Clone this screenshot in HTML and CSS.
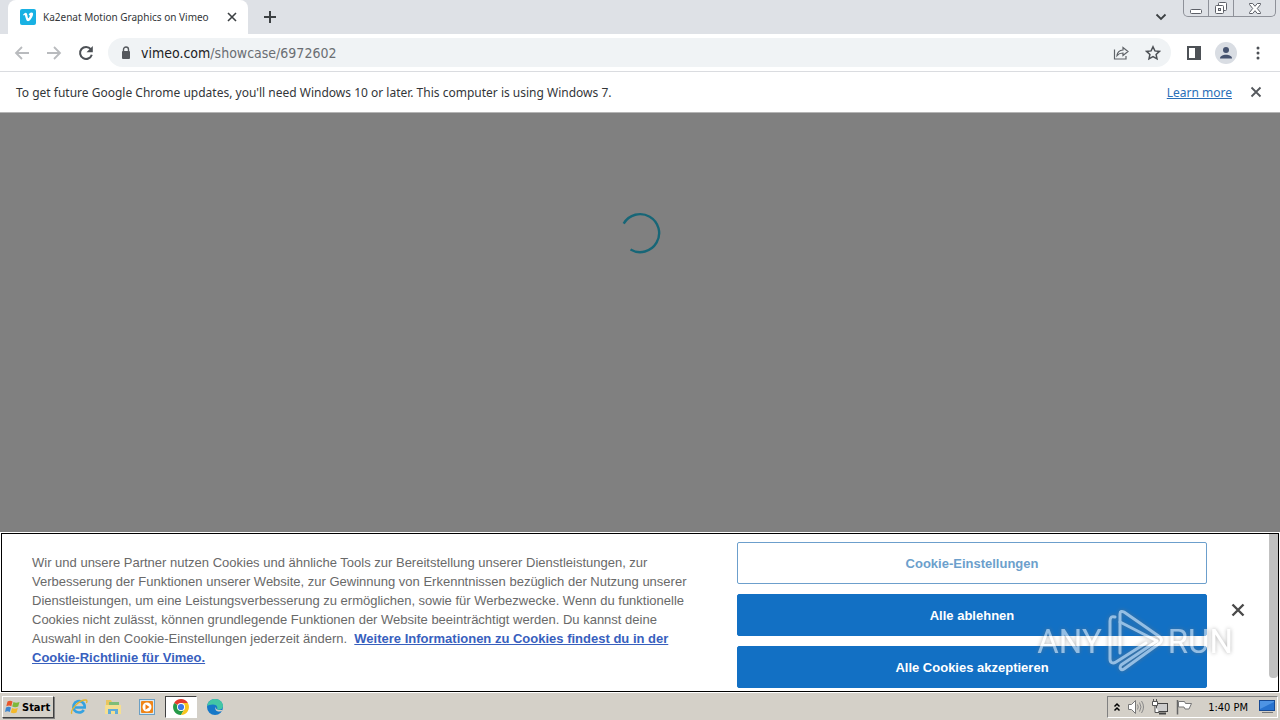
FILE: index.html
```html
<!DOCTYPE html>
<html lang="de">
<head>
    <meta charset="UTF-8">
    <meta name="viewport" content="width=device-width, initial-scale=1.0">
    <title>Ka2enat Motion Graphics on Vimeo</title>
    <link rel="stylesheet" href="styles.css">
</head>
<body>

    <header class="browser">
        <div class="tabstrip">
            <div class="tab">
                <svg class="favicon" viewBox="0 0 16 16" width="16" height="16">
                    <rect width="16" height="16" rx="2" fill="#19b1e3"/>
                    <path d="M3 5.700c1.100-1 2-1.900 2.700-1.900 1.900-.1 1.700 4.200 2.400 5.200.5.700 1.700-1.300 1.700-2.300 0-.8-.5-.9-1.100-.6.5-1.700 1.500-2.500 2.800-2.500 3.200 0 .9 4.700-.9 6.900-1.800 2.200-3.700 2.300-4.500-.3L4.900 6.400c-.2-.7-.7-.3-1.300 0z" fill="#fff"/>
                </svg>
                <span class="tab-title">Ka2enat Motion Graphics on Vimeo</span>
                <button class="icon-btn" aria-label="Close tab">
                    <svg viewBox="0 0 10 10" width="10" height="10"><path d="M1 1l8 8M9 1l-8 8" stroke="#3c4043" stroke-width="1.600"/></svg>
                </button>
            </div>
            <button class="icon-btn new-tab" aria-label="New tab">
                <svg viewBox="0 0 14 14" width="14" height="14"><path d="M7 1v12M1 7h12" stroke="#3c4043" stroke-width="2"/></svg>
            </button>
            <button class="icon-btn tab-search" aria-label="Search tabs">
                <svg viewBox="0 0 12 8" width="12" height="8"><path d="M1.500 1.500L6 6l4.500-4.500" fill="none" stroke="#3c4043" stroke-width="1.800"/></svg>
            </button>
            <div class="window-buttons">
                <button aria-label="Minimize"><svg viewBox="0 0 14 14" width="14" height="14"><rect x="1.500" y="8.500" width="11" height="4" rx="1" fill="#fff" stroke="#5d6068"/></svg></button>
                <button aria-label="Restore"><svg viewBox="0 0 14 14" width="14" height="14"><rect x="4.500" y="1.500" width="8" height="8" rx="1" fill="#fff" stroke="#5d6068"/><rect x="1.500" y="4.500" width="8" height="8" rx="1" fill="#fff" stroke="#5d6068"/><rect x="4.500" y="7.500" width="2" height="2" fill="#dee1e6" stroke="#5d6068"/></svg></button>
                <button class="wide" aria-label="Close"><svg viewBox="0 0 14 14" width="14" height="14"><path d="M1.500 2.500h3.200L7 5.300l2.300-2.800h3.200v1L9.300 7.500l3.200 4v1H9.300L7 9.700l-2.300 2.800H1.500v-1l3.200-4-3.200-4z" fill="#fff" stroke="#5d6068"/></svg></button>
            </div>
        </div>

        <div class="toolbar">
            <button class="icon-btn" aria-label="Back"><svg viewBox="0 0 16 16" width="16" height="16"><path d="M15 8H2M8 2L2 8l6 6" fill="none" stroke="#b9bbbe" stroke-width="1.800"/></svg></button>
            <button class="icon-btn" aria-label="Forward"><svg viewBox="0 0 16 16" width="16" height="16"><path d="M1 8h13M8 2l6 6-6 6" fill="none" stroke="#b9bbbe" stroke-width="1.800"/></svg></button>
            <button class="icon-btn" aria-label="Reload"><svg viewBox="0 0 16 16" width="16" height="16"><path d="M12.800 4.200A6 6 0 1 0 13.800 9.700" fill="none" stroke="#4d5156" stroke-width="2"/><path d="M14.800 1v6.300H8.500z" fill="#4d5156"/></svg></button>
            <div class="omnibox">
                <svg viewBox="0 0 10 14" width="10" height="14"><rect x="1" y="5" width="8" height="8" rx="1" fill="#55585d"/><path d="M2.500 6V3.500a2.500 2.500 0 0 1 5 0V6" fill="none" stroke="#55585d" stroke-width="1.400"/></svg>
                <a class="url" href="#">vimeo.com<span>/showcase/6972602</span></a>
                <button class="icon-btn" aria-label="Share"><svg viewBox="0 0 16 16" width="16" height="16"><path d="M1.500 4.500v9.500h11.500v-3" fill="none" stroke="#5f6368" stroke-width="1.200"/><path d="M4 10.500c.4-3.500 2.500-5.300 6-5.500V2.500L15 6.500l-5 4V8C7.500 8 5.500 8.700 4 10.500z" fill="none" stroke="#5f6368" stroke-width="1.200"/></svg></button>
                <button class="icon-btn" aria-label="Bookmark"><svg viewBox="0 0 16 16" width="16" height="16"><path d="M8 1.800l1.900 4.100 4.500.5-3.300 3 .9 4.400L8 11.600l-4 2.200.9-4.400-3.300-3 4.500-.5z" fill="none" stroke="#4d5156" stroke-width="1.500"/></svg></button>
            </div>
            <button class="icon-btn" aria-label="Side panel"><svg viewBox="0 0 14 14" width="14" height="14"><rect x="1" y="1" width="12" height="12" fill="none" stroke="#4d5156" stroke-width="2"/><rect x="8" y="1" width="5" height="12" fill="#4d5156"/></svg></button>
            <button class="icon-btn profile" aria-label="Profile"><svg viewBox="0 0 22 22" width="22" height="22"><circle cx="11" cy="11" r="11" fill="#d9dde3"/><circle cx="11" cy="8" r="3" fill="#46536f"/><path d="M5 16.500c0-5 12-5 12 0z" fill="#46536f"/></svg></button>
            <button class="icon-btn" aria-label="Menu"><svg viewBox="0 0 4 14" width="4" height="14"><circle cx="2" cy="2" r="1.500" fill="#4d5156"/><circle cx="2" cy="7" r="1.500" fill="#4d5156"/><circle cx="2" cy="12" r="1.500" fill="#4d5156"/></svg></button>
        </div>

        <div class="infobar">
            <span>To get future Google Chrome updates, you'll need Windows 10 or later. This computer is using Windows 7.</span>
            <a href="#">Learn more</a>
            <button class="icon-btn" aria-label="Dismiss"><svg viewBox="0 0 12 12" width="12" height="12"><path d="M1.500 1.500l9 9M10.500 1.500l-9 9" stroke="#55585d" stroke-width="1.800"/></svg></button>
        </div>
    </header>

    <main class="page">
        <svg class="spinner" viewBox="0 0 42 42" width="42" height="42"><path d="M4.700 11.600A19 19 0 1 1 11.500 37.500" fill="none" stroke="#176677" stroke-width="2.400"/></svg>
    </main>

    <section class="banner">
        <p class="policy">Wir und unsere Partner nutzen Cookies und ähnliche Tools zur Bereitstellung unserer Dienstleistungen, zur<br>
            Verbesserung der Funktionen unserer Website, zur Gewinnung von Erkenntnissen bezüglich der Nutzung unserer<br>
            Dienstleistungen, um eine Leistungsverbesserung zu ermöglichen, sowie für Werbezwecke. Wenn du funktionelle<br>
            Cookies nicht zulässt, können grundlegende Funktionen der Website beeinträchtigt werden. Du kannst deine<br>
            Auswahl in den Cookie-Einstellungen jederzeit ändern. &nbsp;<a href="#">Weitere Informationen zu Cookies findest du in der<br>
            Cookie-Richtlinie für Vimeo.</a></p>
        <div class="choices">
            <button class="settings">Cookie-Einstellungen</button>
            <button>Alle ablehnen</button>
            <button>Alle Cookies akzeptieren</button>
        </div>
        <button class="icon-btn banner-close" aria-label="Schließen"><svg viewBox="0 0 14 14" width="14" height="14"><path d="M1.500 1.500l11 11M12.500 1.500l-11 11" stroke="#4a4a4a" stroke-width="2.400"/></svg></button>
        <div class="scrollbar"></div>
    </section>

    <div class="watermark">
        <span>ANY</span>
        <svg viewBox="0 0 56 64" width="56" height="64">
            <g fill="none" stroke="#fff" stroke-width="3" stroke-linejoin="round" stroke-linecap="round">
                <path d="M8 8c-3-1-5 0-5 4v38c0 4 3 5 6 3l30-19"/>
                <path d="M13 44V5c0-3 2-3 4-2l36 25c2 2 2 4 0 6L17 60c-3 2-5-1-3-4l36-24"/>
                <path d="M13 13l37 19"/>
            </g>
        </svg>
        <span>RUN</span>
    </div>

    <footer class="taskbar">
        <button class="start">
            <svg viewBox="0 0 16 16" width="16" height="16"><path d="M2.500 2.500c2-1.200 3.500-1 5 0L6.300 7.200c-1.500-1-3-1-5 0z" fill="#e8562a"/><path d="M8.500 3c1.700 1 3.500 1 6 0l-1.300 4.600c-2 1-4 1-6 0z" fill="#7db83a"/><path d="M1 8.500c2-1 3.500-1 5 0L4.800 13c-1.500-1-3-1-4.800 0z" fill="#3c86d0"/><path d="M7 9c1.800 1 3.500 1 5.800 0l-1.200 4.500c-2 1-4 1-5.800 0z" fill="#f4b92b"/></svg>
            Start
        </button>
        <nav class="tasks">
            <button aria-label="Internet Explorer"><svg viewBox="0 0 18 18" width="18" height="18"><path d="M13.800 12A5.700 5.700 0 1 1 14.700 9.500H5" fill="none" stroke="#35a2e0" stroke-width="2.600"/><path d="M2 15.800C-1 13 9 1.500 16 2c1.500.2 1 2 .4 3" fill="none" stroke="#e5b52c" stroke-width="1.300"/></svg></button>
            <button aria-label="Explorer"><svg viewBox="0 0 18 18" width="18" height="18"><path d="M2 2h5l1 2h7v10H2z" fill="#e9c55f"/><path d="M5 4h10v3H5z" fill="#7fbd78"/><path d="M1 7h16v9H1z" fill="#f5df91"/><path d="M4 16v-5h10v5h-3v-3H7v3z" fill="#62acd8"/></svg></button>
            <button aria-label="Media Player"><svg viewBox="0 0 18 18" width="18" height="18"><rect x="1.500" y="1.500" width="15" height="15" fill="#d7e9f5" stroke="#6b9fc4"/><rect x="3" y="3" width="12" height="12" rx="1" fill="#ef8519"/><circle cx="9" cy="9" r="4.500" fill="#fff"/><path d="M7.500 6.300v5.400l4-2.700z" fill="#ef7a12"/></svg></button>
            <button class="active" aria-label="Chrome"><svg viewBox="0 0 18 18" width="18" height="18"><path d="M9 9L2.100 5A8 8 0 0 1 15.900 5H9z" fill="#e33b2e"/><path d="M9 9l3.500 2L9 17A8 8 0 0 1 2.100 5z" fill="#269a48"/><path d="M9 5h6.900A8 8 0 0 1 9 17l3.500-6z" fill="#f8c51f"/><circle cx="9" cy="9" r="4" fill="#fff"/><circle cx="9" cy="9" r="3.100" fill="#3b78e7"/></svg></button>
            <button aria-label="Edge"><svg viewBox="0 0 18 18" width="18" height="18"><circle cx="9" cy="9" r="8" fill="#1678c8"/><path d="M1.200 8C2 3 5.500 1 9 1c5 0 8 3.500 8 7 0 3-3 4.500-6 3.500 1-2 0-5-4-5-3 0-5 1-5.800 1.500z" fill="#43c6a5"/><path d="M9.700 9c-1 2 0 4.500 3.500 4.600 1.500 0 2.500-.4 3.100-1.100.8-1.500-2.500.5-5.300-1-1-.6-1-1.500-1.300-2.500z" fill="#d4d0c8"/></svg></button>
        </nav>
        <div class="tray">
            <svg viewBox="0 0 8 10" width="8" height="10"><path d="M1.500 4.500L4 2l2.500 2.500M1.500 8.500L4 6l2.500 2.500" fill="none" stroke="#000" stroke-width="1.500"/></svg>
            <svg viewBox="0 0 18 16" width="18" height="16"><path d="M1.500 5.500h3l4-4v13l-4-4h-3z" fill="#fff" stroke="#777"/><path d="M10.500 5.500q1.500 2.500 0 5M12.500 3.500q3 4.500 0 9M14.500 2q4 6 0 12" fill="none" stroke="#888"/></svg>
            <svg viewBox="0 0 18 16" width="18" height="16"><rect x="5.500" y="4.500" width="11" height="8" fill="#ccc" stroke="#444"/><path d="M8 14.500h7" stroke="#444" stroke-width="2"/><path d="M1.500 2.500h5v4h-5zM2.500 0v2M5.500 0v2M4 6.500v7h4" fill="#fff" stroke="#555"/></svg>
            <svg viewBox="0 0 18 16" width="18" height="16"><path d="M2.500 1v14.500" stroke="#666" stroke-width="1.500"/><path d="M3.500 2.500h6l1 2h6l-2.500 5.500h-4l-1-2H3.500z" fill="#fff" stroke="#777"/></svg>
            <time>1:40 PM</time>
            <svg viewBox="0 0 16 14" width="16" height="14"><rect x=".5" y=".5" width="15" height="10" fill="#2873cf" stroke="#174a94"/><path d="M1 9L15 2V1H1z" fill="#4e94e4"/><path d="M3 12.500h11" stroke="#777"/></svg>
        </div>
    </footer>

</body>
</html>
```
FILE: styles.css
```css
* {
    box-sizing: border-box;
}
body {
    display: flex;
    flex-direction: column;
    height: 100vh;
    margin: 0;
    overflow: hidden;
    font-family: "Noto Sans", sans-serif;
    font-size: 12px;
    color: #333639;
    background-color: #808080;
}
svg {
    display: block;
    flex: none;
}
button {
    font: inherit;
    cursor: pointer;
}
.icon-btn {
    display: flex;
    align-items: center;
    justify-content: center;
    padding: 0;
    border: none;
    background: none;
}

/* browser window */
.browser {
    flex: none;
    background-color: white;
}
.tabstrip {
    display: flex;
    align-items: center;
    height: 34px;
    padding-left: 8px;
    background-color: #dee1e6;
}
.tab {
    display: flex;
    align-items: center;
    width: 240px;
    height: 34px;
    padding: 0 11px 0 12px;
    border-radius: 8px 8px 0 0;
    background-color: white;
}
.tab-title {
    flex: 1;
    margin-left: 7px;
    font-size: 10px;
    white-space: nowrap;
}
.new-tab {
    margin-left: 15px;
}
.tab-search {
    margin-left: auto;
    margin-right: 16px;
}
.window-buttons {
    display: flex;
    align-self: flex-start;
    height: 17px;
    margin-right: 4px;
    border: 1px solid #8e9199;
    border-top: none;
    border-radius: 0 0 5px 5px;
}
.window-buttons button {
    display: flex;
    align-items: center;
    justify-content: center;
    width: 25px;
    padding: 0;
    border: none;
    border-right: 1px solid #8e9199;
    background: none;
}
.window-buttons .wide {
    width: 41px;
    border-right: none;
}
.toolbar {
    display: flex;
    align-items: center;
    gap: 16px;
    height: 38px;
    padding: 0 20px 0 14px;
    border-bottom: 1px solid #dadce0;
}
.profile {
    margin: 0 3px 0 -2px;
}
.omnibox {
    display: flex;
    flex: 1;
    align-items: center;
    gap: 16px;
    height: 29px;
    margin-left: -2px;
    padding: 0 10px 0 13px;
    border-radius: 15px;
    background-color: #f0f3f5;
}
.url {
    flex: 1;
    margin-left: -6px;
    font-family: "DejaVu Sans Condensed", "DejaVu Sans", sans-serif;
    font-size: 14px;
    color: #202124;
    text-decoration: none;
}
.url span {
    color: #6a6e73;
}
.infobar {
    display: flex;
    align-items: center;
    height: 41px;
    padding: 0 18px 0 16px;
    border-bottom: 1px solid #b5b5b5;
}
.infobar a {
    margin-left: auto;
    margin-right: 18px;
    color: #2a6fb8;
}

/* dimmed page */
.page {
    display: flex;
    flex: 1;
    justify-content: center;
    padding-top: 99px;
}

/* cookie banner */
.banner {
    display: flex;
    flex: none;
    height: 159px;
    border: 1px solid black;
    outline: 1px solid white;
    margin: 0 1px;
    background-color: white;
    font-family: "Liberation Sans", Arial, sans-serif;
    font-size: 13px;
}
.policy {
    flex: 1;
    margin: 0;
    padding: 19px 0 0 30px;
    color: #696969;
    line-height: 19px;
    white-space: nowrap;
}
.policy a {
    font-weight: bold;
    color: #3860be;
}
.choices {
    display: flex;
    flex-direction: column;
    gap: 10px;
    width: 470px;
    padding-top: 8px;
}
.choices button {
    flex: none;
    height: 42px;
    border: 1px solid #1270c4;
    border-radius: 2px;
    background-color: #1270c4;
    color: white;
    font-weight: bold;
}
.choices .settings {
    background-color: white;
    color: #6c9fcc;
    border-color: #6c9fcc;
}
.banner-close {
    width: 62px;
    height: 152px;
}
.scrollbar {
    width: 9px;
    height: 144px;
    border-radius: 0 0 4px 4px;
    background-color: #c1c1c1;
}

/* logo over the lower right corner */
.watermark {
    position: absolute;
    right: 47px;
    bottom: 47px;
    display: flex;
    align-items: center;
    gap: 5px;
    font-family: Roboto, sans-serif;
    font-size: 33px;
    color: white;
    opacity: 0.55;
    filter: drop-shadow(0 0 2px #777);
    pointer-events: none;
}

/* taskbar */
.taskbar {
    display: flex;
    flex: none;
    align-items: center;
    height: 28px;
    padding: 1px 2px 0;
    border-top: 1px solid white;
    background-color: #d4d0c8;
    color: black;
}
.start {
    display: flex;
    align-items: center;
    gap: 1px;
    height: 22px;
    padding: 0 3px 0 2px;
    border: 1px solid;
    border-color: white #404040 #404040 white;
    box-shadow: 1px 1px 0 #808080;
    background-color: #d4d0c8;
    font-family: "DejaVu Sans Condensed", sans-serif;
    font-size: 11px;
    font-weight: bold;
}
.tasks {
    display: flex;
    gap: 2px;
    margin-left: 9px;
}
.tasks button {
    display: flex;
    align-items: center;
    justify-content: center;
    width: 32px;
    height: 22px;
    padding: 0;
    border: 1px solid transparent;
    background: none;
}
.tasks .active {
    border-color: #404040 white white #404040;
    background-color: white;
}
.tray {
    display: flex;
    align-items: center;
    gap: 6px;
    height: 22px;
    margin-left: auto;
    padding: 0 2px 0 5px;
    border: 1px solid;
    border-color: #808080 white white #808080;
}
.tray time {
    margin: 0 5px 0 9px;
    font-family: "DejaVu Sans Condensed", sans-serif;
    font-size: 11px;
}
```
